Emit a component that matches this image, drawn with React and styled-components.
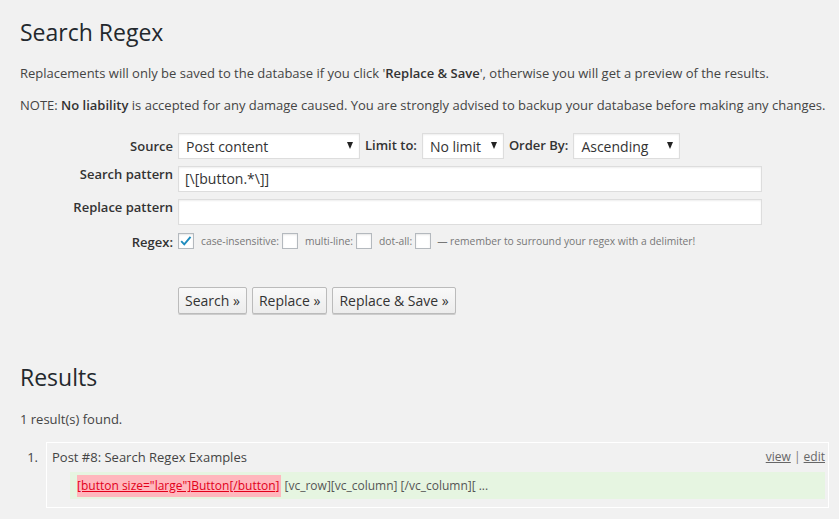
import styled, { createGlobalStyle } from "styled-components";

const GlobalStyle = createGlobalStyle`
  body {
    margin: 0;
    background: #f1f1f1;
    font-family: "Open Sans", "Liberation Sans", sans-serif;
    color: #444;
  }
`;

const Wrap = styled.div`
  padding: 18px 10px 20px 20px;
`;

const Heading = styled.h1`
  margin: 0;
  font-size: 23px;
  line-height: 29px;
  font-weight: 400;
  color: #23282d;
`;

const Para = styled.p`
  margin: ${(p) => p.$top || 0}px 0 0;
  font-size: 13px;
  line-height: 20px;
  strong {
    font-weight: 600;
    color: #333;
  }
`;

const Form = styled.div`
  margin-top: 18px;
  display: grid;
  grid-template-columns: 153px 584px;
  column-gap: 5px;
  row-gap: 7px;
`;

const Label = styled.div`
  text-align: right;
  font-size: 13px;
  font-weight: 600;
  color: #333;
  line-height: 20px;
  align-self: ${(p) => (p.$center ? "center" : "start")};
  margin-top: ${(p) => p.$shift || 0}px;
`;

const Inline = styled.div`
  display: flex;
  align-items: center;
  gap: 5px;
`;

const InlineLabel = styled.span`
  font-size: 13px;
  font-weight: 600;
  color: #333;
  margin-top: -2px;
`;

const Select = styled.div`
  box-sizing: border-box;
  width: ${(p) => p.$width}px;
  height: 26px;
  background: #fff;
  border: 1px solid #ddd;
  box-shadow: inset 0 1px 2px rgba(0, 0, 0, 0.07);
  display: flex;
  align-items: center;
  justify-content: space-between;
  padding: 1px 6px 0 7px;
  font-size: 14px;
  color: #333;
`;

const Arrow = styled.span`
  width: 0;
  height: 0;
  border-left: 3.5px solid transparent;
  border-right: 3.5px solid transparent;
  border-top: 7px solid #222;
  margin-top: -3px;
`;

const TextInput = styled.div`
  box-sizing: border-box;
  height: 26px;
  background: #fff;
  border: 1px solid #ddd;
  box-shadow: inset 0 1px 2px rgba(0, 0, 0, 0.07);
  padding: 1px 7px 0 6px;
  font-size: 14px;
  line-height: 22px;
  color: #333;
`;

const RegexRow = styled.div`
  display: flex;
  align-items: center;
  margin-top: 1px;
  height: 16px;
`;

const Box = styled.span`
  box-sizing: border-box;
  width: 16px;
  height: 16px;
  background: #fff;
  border: 1px solid #b4b9be;
  box-shadow: inset 0 1px 2px rgba(0, 0, 0, 0.1);
  display: flex;
  align-items: center;
  justify-content: center;
  margin-right: ${(p) => p.$after}px;
`;

const Small = styled.span`
  font-size: ${(p) => p.$size || 10.3}px;
  color: #777;
  margin-right: 3px;
`;

const Buttons = styled.div`
  margin: 35px 0 0 158px;
  display: flex;
  gap: 5px;
`;

const Button = styled.button`
  box-sizing: border-box;
  height: 27px;
  padding: 0 6px;
  font-family: inherit;
  font-size: 14px;
  color: #333;
  background: linear-gradient(#f9f9f9, #ececec);
  border: 1px solid #bbb;
  border-radius: 2px;
  box-shadow: 0 1px 0 #ccc;
`;

const ResultsHeading = styled(Heading)`
  margin-top: 49px;
`;

const ResultList = styled.div`
  margin-top: 13px;
  display: flex;
`;

const Num = styled.div`
  width: 26px;
  box-sizing: border-box;
  padding: 5px 8px 0 0;
  text-align: right;
  font-size: 13px;
  line-height: 20px;
`;

const Card = styled.div`
  width: 783px;
  box-sizing: border-box;
  border: 1px solid #fff;
  padding: 4px 3px 8px 5px;
`;

const CardHead = styled.div`
  display: flex;
  justify-content: space-between;
  font-size: 13px;
  line-height: 20px;
  color: #444;
`;

const Links = styled.span`
  font-size: 12px;
  color: #777;
  a {
    color: #666;
    text-decoration: underline;
  }
`;

const Match = styled.div`
  margin: 5px 0 0 18px;
  height: 27px;
  background: #e6f5e1;
  display: flex;
  align-items: center;
  padding-left: 7px;
  font-size: 12px;
  color: #555;
`;

const Hit = styled.span`
  background: #ffb7bd;
  color: #e2001a;
  text-decoration: underline;
  padding: 2px 1px 3px 0;
  margin-right: 4px;
`;

export default function App() {
  return (
    <>
      <GlobalStyle />
      <Wrap>
        <Heading>Search Regex</Heading>
        <Para $top={16}>
          Replacements will only be saved to the database if you click '
          <strong>Replace &amp; Save</strong>', otherwise you will get a preview
          of the results.
        </Para>
        <Para $top={12}>
          NOTE: <strong>No liability</strong> is accepted for any damage caused.
          You are strongly advised to backup your database before making any
          changes.
        </Para>

        <Form>
          <Label $center>Source</Label>
          <Inline>
            <Select $width={182}>
              Post content <Arrow />
            </Select>
            <InlineLabel>Limit to:</InlineLabel>
            <Select $width={82}>
              No limit <Arrow />
            </Select>
            <InlineLabel>Order By:</InlineLabel>
            <Select $width={107}>
              Ascending <Arrow />
            </Select>
          </Inline>

          <Label $shift={-2}>Search pattern</Label>
          <TextInput>[\[button.*\]]</TextInput>

          <Label $shift={-2}>Replace pattern</Label>
          <TextInput />

          <Label $center>Regex:</Label>
          <RegexRow>
            <Box $after={7}>
              <svg width="16" height="16" viewBox="0 0 16 16">
                <path
                  d="M2.5 8.2 L6 11.8 L13.2 3.2"
                  fill="none"
                  stroke="#1e8cbe"
                  strokeWidth="2.2"
                />
              </svg>
            </Box>
            <Small>case-insensitive:</Small>
            <Box $after={7} />
            <Small>multi-line:</Small>
            <Box $after={7} />
            <Small>dot-all:</Small>
            <Box $after={6} />
            <Small $size={10.3}>
              — remember to surround your regex with a delimiter!
            </Small>
          </RegexRow>
        </Form>

        <Buttons>
          <Button>Search »</Button>
          <Button>Replace »</Button>
          <Button>Replace &amp; Save »</Button>
        </Buttons>

        <ResultsHeading>Results</ResultsHeading>
        <Para $top={17}>1 result(s) found.</Para>

        <ResultList>
          <Num>1.</Num>
          <Card>
            <CardHead>
              Post #8: Search Regex Examples
              <Links>
                <a>view</a> | <a>edit</a>
              </Links>
            </CardHead>
            <Match>
              <Hit>[button size="large"]Button[/button]</Hit>
              [vc_row][vc_column] [/vc_column][ ...
            </Match>
          </Card>
        </ResultList>
      </Wrap>
    </>
  );
}
